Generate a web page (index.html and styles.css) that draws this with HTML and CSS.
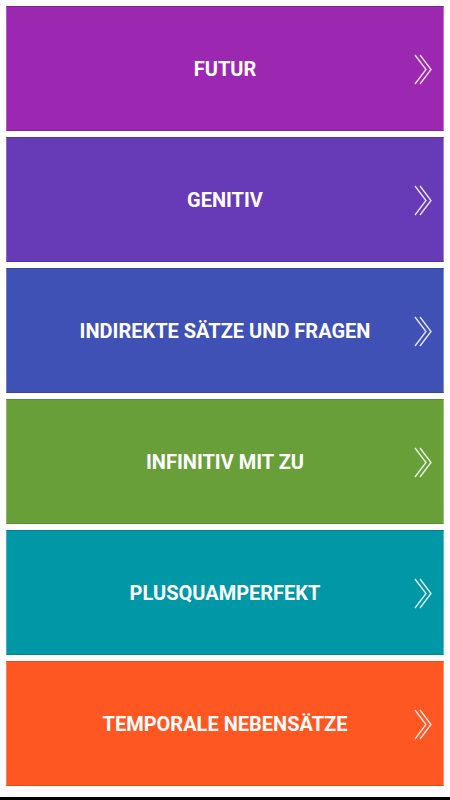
FILE: index.html
```html
<!DOCTYPE html>
<html lang="de">
<head>
<meta charset="utf-8">
<title>Grammatik</title>
<link rel="stylesheet" href="styles.css">
</head>
<body>
<main class="list">
  <a class="card card-purple" href="#"><span class="label">FUTUR</span><svg class="chev" viewBox="0 0 20 32"><path d="M2 1 L13 15.5 L2 30 M7 1 L18 15.5 L7 30"/></svg></a>
  <a class="card card-deep" href="#"><span class="label">GENITIV</span><svg class="chev" viewBox="0 0 20 32"><path d="M2 1 L13 15.5 L2 30 M7 1 L18 15.5 L7 30"/></svg></a>
  <a class="card card-indigo" href="#"><span class="label">INDIREKTE SÄTZE UND FRAGEN</span><svg class="chev" viewBox="0 0 20 32"><path d="M2 1 L13 15.5 L2 30 M7 1 L18 15.5 L7 30"/></svg></a>
  <a class="card card-green" href="#"><span class="label">INFINITIV MIT ZU</span><svg class="chev" viewBox="0 0 20 32"><path d="M2 1 L13 15.5 L2 30 M7 1 L18 15.5 L7 30"/></svg></a>
  <a class="card card-cyan" href="#"><span class="label">PLUSQUAMPERFEKT</span><svg class="chev" viewBox="0 0 20 32"><path d="M2 1 L13 15.5 L2 30 M7 1 L18 15.5 L7 30"/></svg></a>
  <a class="card card-orange" href="#"><span class="label">TEMPORALE NEBENSÄTZE</span><svg class="chev" viewBox="0 0 20 32"><path d="M2 1 L13 15.5 L2 30 M7 1 L18 15.5 L7 30"/></svg></a>
</main>
<div class="bottom-line"></div>
</body>
</html>
```

FILE: styles.css
```css
html, body {
  margin: 0;
  padding: 0;
  background: #ffffff;
  font-family: Roboto, "Liberation Sans", sans-serif;
}

.list {
  display: flex;
  flex-direction: column;
  gap: 6px;
  padding: 6px 6px 0 6px;
}

.card {
  position: relative;
  height: 125px;
  box-sizing: border-box;
  display: flex;
  align-items: center;
  justify-content: center;
  text-decoration: none;
  border: 1px solid rgba(0, 0, 0, 0.12);
  border-left-color: rgba(255, 255, 255, 0.25);
  border-right-color: rgba(255, 255, 255, 0.35);
}

.label {
  color: #ffffff;
  font-weight: 700;
  font-size: 20px;
  letter-spacing: 0;
  padding-top: 1px;
}

.chev {
  position: absolute;
  right: 10px;
  top: 47px;
  width: 20px;
  height: 32px;
  fill: none;
  stroke: rgba(255, 255, 255, 0.85);
  stroke-width: 1.4;
}

.card-purple { background: #9c27b0; }
.card-deep { background: #673ab7; }
.card-indigo { background: #3f51b5; }
.card-green { background: #689f38; }
.card-cyan { background: #0097a7; }
.card-orange { background: #ff5722; }

.bottom-line {
  margin-top: 11px;
  height: 3px;
  background: #000000;
}
```
